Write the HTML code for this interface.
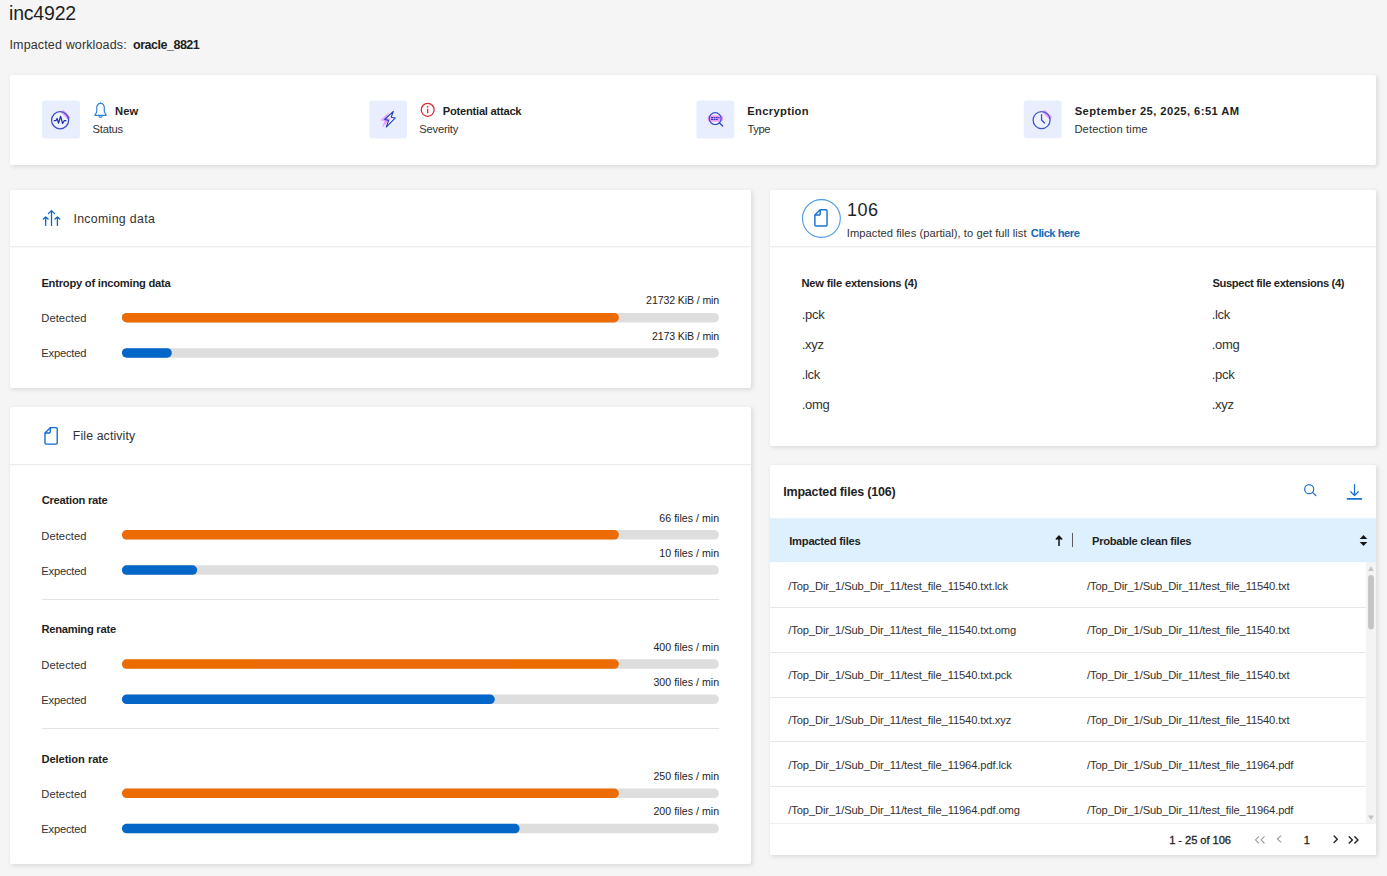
<!DOCTYPE html>
<html lang="en">
<head>
<meta charset="utf-8">
<title>inc4922</title>
<style>
*{box-sizing:border-box;margin:0;padding:0}
html,body{width:1387px;height:876px;overflow:hidden}
body{position:relative;background:#f5f5f5;font-family:"Liberation Sans",sans-serif;color:#242424;font-size:12px}
.t{position:absolute;white-space:nowrap;line-height:1;}
.b{font-weight:bold}
.card{position:absolute;background:#fff;border-radius:2px;box-shadow:1.2px 1.6px 4px rgba(0,0,0,.1)}
.hr{position:absolute;height:1px;background:#ebebeb}
.val{right:668px;font-size:10.6px;color:#242424;letter-spacing:-.12px;margin-right:-.12px}
.lbl{letter-spacing:.05px}
.r1{letter-spacing:-.125px}
.r2{letter-spacing:-.15px}
.e1,.e2{letter-spacing:-.3px}
svg{position:absolute;overflow:visible}
</style>
</head>
<body>
<!-- header -->
<div class="t" id="title" style="left:9.1px;top:4.1px;font-size:19.5px;color:#1f1f1f;letter-spacing:-0.217px">inc4922</div>
<div class="t" id="iw" style="left:9.5px;top:38.9px;font-size:12.5px;color:#323232;letter-spacing:0.140px">Impacted workloads:</div>
<div class="t b" id="ora" style="left:133.1px;top:38.9px;font-size:12.5px;color:#1f1f1f;letter-spacing:-0.490px">oracle_8821</div>

<!-- summary card -->
<div class="card" id="c0" style="left:10px;top:75px;width:1366px;height:89.5px"></div>


<!-- summary tiles -->
<svg class="tl" style="left:41px;top:99px" width="42" height="42" viewBox="0 0 42 42" fill="none"><rect x="1.10" y="1.60" width="37.8" height="37.8" rx="3" fill="#e8eefd"/><g transform="translate(1.10 1.60)"><circle cx="18" cy="19.65" r="8.55" fill="#f0f3fe"/><rect x="21.70" y="8.65" width="3.700" height="11" rx="1.300" transform="rotate(-45 23.55 14.15)" fill="#e9a0fc"/><circle cx="18" cy="19.65" r="8.55" stroke="#3a4ec8" stroke-width="1.25"/><path d="M12.100 20.100H13.800L15 17.900 16.350 22.600 18.550 15.700 20.500 22.900 22.100 20.100H23.800" stroke="#1c32b2" stroke-width="1.250" stroke-linecap="round" stroke-linejoin="round"/></g></svg>
<svg id="bell" style="left:94px;top:102px" width="14" height="17" viewBox="0 0 14 17" fill="none"><path d="M6.55 1.4C4 1.4 2.8 3.3 2.8 5.6V9.600C2.800 10.600 2.200 11.400 .900 12.900C.700 13.200 .800 13.450 1.200 13.450H11.900C12.300 13.450 12.400 13.200 12.200 12.900C10.900 11.400 10.300 10.600 10.300 9.600V5.600C10.300 3.300 9.100 1.400 6.550 1.400Z" stroke="#2a84d8" stroke-width="1.200" stroke-linejoin="round"/><path d="M6.550 .700V1.400" stroke="#2a84d8" stroke-width="1.100" stroke-linecap="round"/><path d="M4.900 13.900c.300 1 .900 1.500 1.650 1.500s1.350-.500 1.650-1.500" stroke="#2a84d8" stroke-width="1.150" stroke-linecap="round"/></svg>
<div class="t b" id="s1a" style="left:115px;top:105.6px;font-size:11.2px;color:#1f1f1f;letter-spacing:0.08px">New</div>
<div class="t" id="s1b" style="left:92.6px;top:124.2px;font-size:11.2px;color:#323232;letter-spacing:-0.24px">Status</div>

<svg class="tl" style="left:368px;top:99px" width="42" height="42" viewBox="0 0 42 42" fill="none"><rect x="1.25" y="1.60" width="37.8" height="37.8" rx="3" fill="#e8eefd"/><g transform="translate(1.25 1.60)"><path d="M24.100 10.800L15.400 18.900l4.100.850-2.500 6.700 9.100-9.100-4.200-.700z" fill="#f5f7ff"/><path d="M24.100 10.800L15.400 18.900l4.100.850-2.500 6.700 9.100-9.100-4.200-.700z" transform="translate(-4.300 .750)" fill="#e9a0fc"/><path d="M24.100 10.800L15.400 18.900l4.100.850-2.500 6.700 9.100-9.100-4.200-.700z" stroke="#223eb9" stroke-width="1.100" stroke-linejoin="round"/></g></svg>
<svg id="info" style="left:420px;top:102px" width="16" height="16" viewBox="0 0 16 16" fill="none"><circle cx="7.700" cy="7.850" r="6.450" stroke="#d9282f" stroke-width="1.250"/><rect x="7.050" y="6.700" width="1.300" height="4.600" rx=".400" fill="#d9282f"/><circle cx="7.700" cy="4.800" r=".850" fill="#d9282f"/></svg>
<div class="t b" id="s2a" style="left:442.8px;top:105.5px;font-size:11.2px;color:#1f1f1f;letter-spacing:-0.26px">Potential attack</div>
<div class="t" id="s2b" style="left:419.2px;top:124.2px;font-size:11.2px;color:#323232;letter-spacing:-0.172px">Severity</div>

<svg class="tl" style="left:695px;top:99px" width="42" height="42" viewBox="0 0 42 42" fill="none"><rect x="1.45" y="1.60" width="37.8" height="37.8" rx="3" fill="#e8eefd"/><g transform="translate(1.45 1.60)"><circle cx="18.750" cy="17.950" r="5.950" fill="#f5f7ff"/><rect x="11.300" y="14.600" width="15.300" height="6.600" rx="2.400" fill="#e9a0fc"/><circle cx="18.750" cy="17.950" r="5.950" stroke="#3852c9" stroke-width="1.250"/><path d="M23.100 22.350l3.100 3.100" stroke="#2c47c1" stroke-width="1.350" stroke-linecap="round"/><path d="M14.600 17h8.700M14.600 18.900h7" stroke="#3434bd" stroke-width="1.100" stroke-dasharray="2.200 .500 1.300 .500"/></g></svg>
<div class="t b" id="s3a" style="left:747.3px;top:105.6px;font-size:11.2px;color:#1f1f1f;letter-spacing:0.32px">Encryption</div>
<div class="t" id="s3b" style="left:747.6px;top:124.2px;font-size:11.2px;color:#323232;letter-spacing:-0.45px">Type</div>

<svg class="tl" style="left:1022px;top:99px" width="42" height="42" viewBox="0 0 42 42" fill="none"><rect x="1.75" y="1.45" width="37.8" height="37.8" rx="3" fill="#e8eefd"/><g transform="translate(1.75 1.45)"><circle cx="17.85" cy="19.65" r="8.5" fill="#f0f3fe"/><rect x="21.55" y="8.75" width="3.700" height="11" rx="1.300" transform="rotate(-45 23.40 14.25)" fill="#e9a0fc"/><circle cx="17.85" cy="19.65" r="8.5" stroke="#3f57ca" stroke-width="1.3"/><path d="M17.8 14.100v5.400l3 3.100" stroke="#3852c9" stroke-width="1.300" stroke-linecap="round" stroke-linejoin="round"/></g></svg>
<div class="t b" id="s4a" style="left:1074.7px;top:105.6px;font-size:11.2px;color:#1f1f1f;letter-spacing:0.435px">September 25, 2025, 6:51 AM</div>
<div class="t" id="s4b" style="left:1074.4px;top:124.2px;font-size:11.2px;color:#323232;letter-spacing:0.13px">Detection time</div>

<!-- left cards -->
<div class="card" id="c1" style="left:10px;top:190px;width:741px;height:198px"></div>
<div class="card" id="c2" style="left:10px;top:407px;width:741px;height:457px"></div>


<!-- bars -->
<svg id="bars" style="left:0;top:0" width="760" height="876" viewBox="0 0 760 876">
<rect x="121.9" y="312.95" width="597" height="9.55" rx="4.78" fill="#dedede"/><rect x="121.9" y="312.95" width="497" height="9.55" rx="4.78" fill="#ed6b03"/>
<rect x="121.9" y="348.2" width="597" height="9.55" rx="4.78" fill="#dedede"/><rect x="121.9" y="348.2" width="49.9" height="9.55" rx="4.78" fill="#0466c6"/>
<rect x="121.9" y="530.0" width="597" height="9.55" rx="4.78" fill="#dedede"/><rect x="121.9" y="530.0" width="497" height="9.55" rx="4.78" fill="#ed6b03"/>
<rect x="121.9" y="565.25" width="597" height="9.55" rx="4.78" fill="#dedede"/><rect x="121.9" y="565.25" width="75.3" height="9.55" rx="4.78" fill="#0466c6"/>
<rect x="121.9" y="659.3" width="597" height="9.55" rx="4.78" fill="#dedede"/><rect x="121.9" y="659.3" width="497" height="9.55" rx="4.78" fill="#ed6b03"/>
<rect x="121.9" y="694.55" width="597" height="9.55" rx="4.78" fill="#dedede"/><rect x="121.9" y="694.55" width="372.9" height="9.55" rx="4.78" fill="#0466c6"/>
<rect x="121.9" y="788.55" width="597" height="9.55" rx="4.78" fill="#dedede"/><rect x="121.9" y="788.55" width="497" height="9.55" rx="4.78" fill="#ed6b03"/>
<rect x="121.9" y="823.8" width="597" height="9.55" rx="4.78" fill="#dedede"/><rect x="121.9" y="823.8" width="397.7" height="9.55" rx="4.78" fill="#0466c6"/>
</svg>
<!-- incoming data -->
<svg id="ic-in" style="left:42px;top:209px" width="20" height="18" viewBox="0 0 20 18" fill="none" stroke="#0b67c7" stroke-width="1.3" stroke-linecap="round" stroke-linejoin="round"><path d="M9.500 16.400V1.700M6.400 4.600L9.500 1.600l3.100 3"/><path d="M3.700 16.400V8M1.300 10L3.700 7.900l2.400 2.100"/><path d="M15.400 16.400V8M13 10l2.400-2.100 2.400 2.100"/></svg>
<div class="t" id="h-in" style="left:73.4px;top:212.9px;font-size:12.3px;color:#323232;letter-spacing:0.341px">Incoming data</div>
<div class="hr" style="left:10px;top:246px;width:741px;background:#eee;box-shadow:0 1px 0 #f8f8f8"></div>
<div class="t b" id="t-ent" style="left:41.4px;top:278.1px;font-size:11.2px;color:#1f1f1f;letter-spacing:-0.239px">Entropy of incoming data</div>
<div class="t val" style="top:295.4px">21732 KiB / min</div>
<div class="t lbl" style="left:41.3px;top:313.2px;font-size:11.2px;color:#323232">Detected</div>
<div class="t val" style="top:330.6px">2173 KiB / min</div>
<div class="t lbl" style="left:41.3px;top:348.4px;font-size:11.2px;color:#323232;letter-spacing:-.22px">Expected</div>

<!-- file activity -->
<svg id="ic-fa" style="left:43px;top:426px" width="17" height="21" viewBox="0 0 17 21"><g stroke="#1169c8" stroke-width="1.35" stroke-linejoin="round" fill="none"><path d="M7.28 1.68H13.22a1.0 1.0 0 0 1 1.0 1.0V17.12a1.0 1.0 0 0 1 -1.0 1.0H2.98a1.0 1.0 0 0 1 -1.0 -1.0V6.97Z"/><path d="M7.28 1.68V5.77a1.2 1.2 0 0 1 -1.2 1.2H1.98"/></g></svg>
<div class="t" id="h-fa" style="left:72.8px;top:430.4px;font-size:12.3px;color:#323232;letter-spacing:0.124px">File activity</div>
<div class="hr" style="left:10px;top:464px;width:741px;background:#ececec;box-shadow:0 1px 0 #fafafa"></div>
<div class="t b" id="t-cr" style="left:41.7px;top:494.8px;font-size:11.2px;color:#1f1f1f;letter-spacing:-0.249px">Creation rate</div>
<div class="t val" style="top:512.8px; letter-spacing:.02px">66 files / min</div>
<div class="t lbl" style="left:41.3px;top:530.6px;font-size:11.2px;color:#323232">Detected</div>
<div class="t val" style="top:547.9px; letter-spacing:.02px">10 files / min</div>
<div class="t lbl" style="left:41.3px;top:565.7px;font-size:11.2px;color:#323232;letter-spacing:-.22px">Expected</div>

<div class="hr" style="left:42px;top:599px;width:677px;background:#e3e3e3"></div>
<div class="t b" id="t-rn" style="left:41.4px;top:624.4px;font-size:11.2px;color:#1f1f1f;letter-spacing:-0.249px">Renaming rate</div>
<div class="t val" style="top:642.0px; letter-spacing:.02px">400 files / min</div>
<div class="t lbl" style="left:41.3px;top:659.8px;font-size:11.2px;color:#323232">Detected</div>
<div class="t val" style="top:677.2px; letter-spacing:.02px">300 files / min</div>
<div class="t lbl" style="left:41.3px;top:695.0px;font-size:11.2px;color:#323232;letter-spacing:-.22px">Expected</div>

<div class="hr" style="left:42px;top:728.300px;width:677px;background:#e3e3e3"></div>
<div class="t b" id="t-dl" style="left:41.4px;top:753.5px;font-size:11.2px;color:#1f1f1f;letter-spacing:-0.084px">Deletion rate</div>
<div class="t val" style="top:771.2px; letter-spacing:.02px">250 files / min</div>
<div class="t lbl" style="left:41.3px;top:789.0px;font-size:11.2px;color:#323232">Detected</div>
<div class="t val" style="top:806.4px; letter-spacing:.02px">200 files / min</div>
<div class="t lbl" style="left:41.3px;top:824.2px;font-size:11.2px;color:#323232;letter-spacing:-.22px">Expected</div>

<!-- right cards -->
<div class="card" id="c3" style="left:770px;top:190px;width:606px;height:255.5px"></div>
<div class="card" id="c4" style="left:770px;top:465px;width:606px;height:390px"></div>

<!-- impacted summary -->
<svg id="ic-circ" style="left:801px;top:198px" width="42" height="42" viewBox="0 0 42 42" fill="none"><circle cx="20.4" cy="20.5" r="18.9" stroke="#4d9ae2" stroke-width="1.100"/><g stroke="#1a72d0" stroke-width="1.45" stroke-linejoin="round" fill="none"><path d="M19.18 11.67H25.02a1.0 1.0 0 0 1 1.0 1.0V27.02a1.0 1.0 0 0 1 -1.0 1.0H14.88a1.0 1.0 0 0 1 -1.0 -1.0V16.97Z"/><path d="M19.18 11.67V15.77a1.2 1.2 0 0 1 -1.2 1.2H13.88"/></g></svg>
<div class="t" id="n106" style="left:847.0px;top:201.0px;font-size:18px;color:#1f1f1f;letter-spacing:0.500px">106</div>
<div class="t" id="sub106" style="left:846.8px;top:227.9px;font-size:11.2px;color:#323232;letter-spacing:0.031px">Impacted files (partial), to get full list</div>
<div class="t b" id="click" style="left:1030.8px;top:227.9px;font-size:11.2px;color:#0f6cbd;letter-spacing:-0.489px">Click here</div>
<div class="hr" style="left:770px;top:246px;width:606px;background:#eee;box-shadow:0 1px 0 #f8f8f8"></div>
<div class="t b" id="t-new" style="left:801.4px;top:278.3px;font-size:11.2px;color:#1f1f1f;letter-spacing:-0.205px">New file extensions (4)</div>
<div class="t b" id="t-sus" style="left:1212.4px;top:278.3px;font-size:11.2px;color:#1f1f1f;letter-spacing:-0.347px">Suspect file extensions (4)</div>
<div class="t e1" style="left:801.7px;top:308.2px;font-size:13px;color:#323232">.pck</div>
<div class="t e2" style="left:1211.7px;top:308.2px;font-size:13px;color:#323232">.lck</div>
<div class="t e1" style="left:801.7px;top:338.3px;font-size:13px;color:#323232">.xyz</div>
<div class="t e2" style="left:1211.7px;top:338.3px;font-size:13px;color:#323232">.omg</div>
<div class="t e1" style="left:801.7px;top:368.3px;font-size:13px;color:#323232">.lck</div>
<div class="t e2" style="left:1211.7px;top:368.3px;font-size:13px;color:#323232">.pck</div>
<div class="t e1" style="left:801.7px;top:398.4px;font-size:13px;color:#323232">.omg</div>
<div class="t e2" style="left:1211.7px;top:398.4px;font-size:13px;color:#323232">.xyz</div>

<!-- table -->
<div class="t b" id="t-imp" style="left:783.2px;top:486.0px;font-size:12.5px;color:#1f1f1f;letter-spacing:-0.185px">Impacted files (106)</div>
<svg id="ic-search" style="left:1303px;top:483px" width="15" height="15" viewBox="0 0 15 15" fill="none" stroke="#1a70cc" stroke-width="1.25" stroke-linecap="round"><circle cx="6.200" cy="6.150" r="4.500"/><path d="M9.500 9.400l3.300 3.100"/></svg>
<svg id="ic-dl" style="left:1346px;top:483px" width="18" height="18" viewBox="0 0 18 18" fill="none" stroke="#1a70cc" stroke-linecap="round" stroke-linejoin="round"><path d="M8.500 1.600v10.600M4.700 8.800L8.500 12.500l3.800-3.700" stroke-width="1.250"/><path d="M1.600 15.900h13.800" stroke-width="1.700"/></svg>
<svg id="thead" style="left:770px;top:517px" width="606" height="47" viewBox="0 0 606 47"><rect x="0" y="1.2" width="606" height="43.9" fill="#def0fd"/></svg>
<div class="t b" id="th1" style="left:789.2px;top:535.9px;font-size:11.2px;color:#1f1f1f;letter-spacing:-0.232px">Impacted files</div>
<svg id="ic-up" style="left:1055.100px;top:534px" width="8" height="13" viewBox="0 0 8 13" fill="none" stroke="#161616" stroke-width="1.500" stroke-linejoin="round" stroke-linecap="butt"><path d="M4 11.900V2.200"/><path d="M.800 5.400L4 1.900l3.200 3.500" fill="#161616" stroke-width="1.300"/></svg>
<div style="position:absolute;left:1072px;top:533px;width:1px;height:14px;background:#5a5a5a"></div>
<div class="t b" id="th2" style="left:1092.0px;top:535.9px;font-size:11.2px;color:#1f1f1f;letter-spacing:-0.290px">Probable clean files</div>
<svg id="ic-sort" style="left:1359px;top:534px" width="9" height="13" viewBox="0 0 9 13"><path d="M4.500 1L8.300 5.100H.700z" fill="#161616"/><path d="M4.500 12L8.300 7.900H.700z" fill="#161616"/></svg>
<div class="t r1" style="left:788.3px;top:580.50px;font-size:11.2px;color:#323232">/Top_Dir_1/Sub_Dir_11/test_file_11540.txt.lck</div>
<div class="t r2" style="left:1087.1px;top:580.50px;font-size:11.2px;color:#323232">/Top_Dir_1/Sub_Dir_11/test_file_11540.txt</div>
<div class="hr" style="left:770px;top:607.0px;width:596px;background:#e8e8e8"></div>
<div class="t r1" style="left:788.3px;top:625.33px;font-size:11.2px;color:#323232">/Top_Dir_1/Sub_Dir_11/test_file_11540.txt.omg</div>
<div class="t r2" style="left:1087.1px;top:625.33px;font-size:11.2px;color:#323232">/Top_Dir_1/Sub_Dir_11/test_file_11540.txt</div>
<div class="hr" style="left:770px;top:651.8px;width:596px;background:#e8e8e8"></div>
<div class="t r1" style="left:788.3px;top:670.16px;font-size:11.2px;color:#323232">/Top_Dir_1/Sub_Dir_11/test_file_11540.txt.pck</div>
<div class="t r2" style="left:1087.1px;top:670.16px;font-size:11.2px;color:#323232">/Top_Dir_1/Sub_Dir_11/test_file_11540.txt</div>
<div class="hr" style="left:770px;top:696.6px;width:596px;background:#e8e8e8"></div>
<div class="t r1" style="left:788.3px;top:714.99px;font-size:11.2px;color:#323232">/Top_Dir_1/Sub_Dir_11/test_file_11540.txt.xyz</div>
<div class="t r2" style="left:1087.1px;top:714.99px;font-size:11.2px;color:#323232">/Top_Dir_1/Sub_Dir_11/test_file_11540.txt</div>
<div class="hr" style="left:770px;top:741.4px;width:596px;background:#e8e8e8"></div>
<div class="t r1" style="left:788.3px;top:759.82px;font-size:11.2px;color:#323232">/Top_Dir_1/Sub_Dir_11/test_file_11964.pdf.lck</div>
<div class="t r2" style="left:1087.1px;top:759.82px;font-size:11.2px;color:#323232">/Top_Dir_1/Sub_Dir_11/test_file_11964.pdf</div>
<div class="hr" style="left:770px;top:786.2px;width:596px;background:#e8e8e8"></div>
<div class="t r1" style="left:788.3px;top:804.65px;font-size:11.2px;color:#323232">/Top_Dir_1/Sub_Dir_11/test_file_11964.pdf.omg</div>
<div class="t r2" style="left:1087.1px;top:804.65px;font-size:11.2px;color:#323232">/Top_Dir_1/Sub_Dir_11/test_file_11964.pdf</div>

<!-- scrollbar -->
<div style="position:absolute;left:1366px;top:562px;width:10px;height:261px;background:#f4f4f4"></div>
<svg style="left:1366px;top:562px" width="10" height="261" viewBox="0 0 10 261"><path d="M5 4L7.900 8.900H2.100z" fill="#c6c6c6"/><rect x="2.100" y="13" width="5.800" height="54.400" rx="2.900" fill="#c4c4c4"/><path d="M5 258.100L8.100 253.400H1.900z" fill="#c2c2c2"/></svg>
<!-- pager -->
<div style="position:absolute;left:770px;top:822.500px;width:606px;height:32.500px;background:#fff;border-top:1px solid #f0f0f0;border-radius:0 0 2px 2px"></div>
<div class="t" id="pg" style="left:1169.2px;top:835.2px;font-size:11.2px;color:#242424;-webkit-text-stroke:.300px #242424;letter-spacing:-0.083px">1 - 25 of 106</div>
<div class="t" id="pg1" style="left:1303.800px;top:834.600px;font-size:11.2px;color:#242424;-webkit-text-stroke:.300px #242424">1</div>

<svg id="pager" style="left:1250px;top:830px" width="120" height="20" viewBox="0 0 120 20" fill="none" stroke-linecap="round" stroke-linejoin="round"><path d="M8.70 6.60 L5.50 9.80 L8.70 13.00 M14.20 6.60 L11.00 9.80 L14.20 13.00" stroke="#9c9c9c" stroke-width="1.1"/><path d="M30.90 5.80 L27.40 9.00 L30.90 12.20" stroke="#9c9c9c" stroke-width="1.1"/><path d="M84.10 5.90 L87.30 9.15 L84.10 12.40" stroke="#262626" stroke-width="1.45"/><path d="M99.20 6.70 L102.40 9.90 L99.20 13.10 M104.80 6.70 L108.00 9.90 L104.80 13.10" stroke="#262626" stroke-width="1.45"/></svg>
</body>
</html>
